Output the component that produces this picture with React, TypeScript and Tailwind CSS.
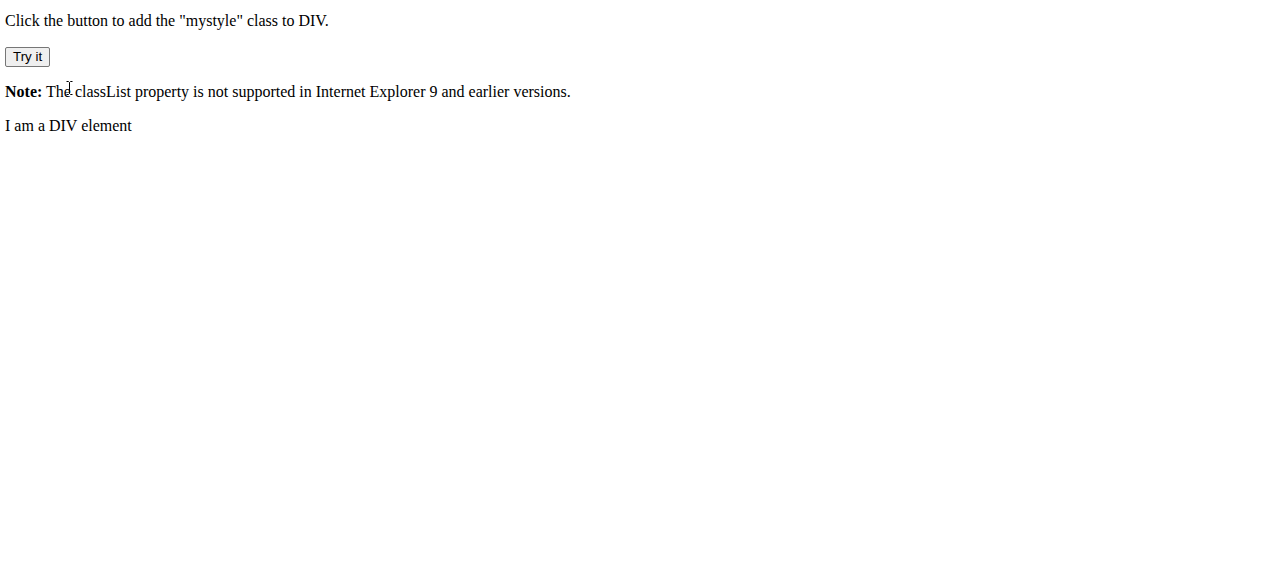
export default function App() {
  return (
    <div className="relative min-h-screen bg-white px-[5px] pt-[12px] text-black [font-family:'Liberation_Serif',serif] text-[16px]">
      <p className="mb-[17px] leading-[18.4px]">
        Click the button to add the "mystyle" class to DIV.
      </p>
      <p className="mb-4 flex">
        <button className="h-[20px] rounded-[2px] border border-[#767676] bg-[#efefef] px-[7px] text-[13.33px] leading-[16px] [font-family:'Liberation_Sans',Arial,sans-serif]">
          Try it
        </button>
      </p>
      <p className="mb-[15px] leading-[18.4px]">
        <strong>Note:</strong> The classList property is not supported in
        Internet Explorer 9 and earlier versions.
      </p>
      <div className="leading-[18px]">I am a DIV element</div>

      {/* text cursor sitting over the note line */}
      <svg
        className="absolute left-[65px] top-[80px]"
        width="9"
        height="16"
        viewBox="0 0 9 16"
      >
        <path
          d="M1.5 1.5h2l1 1 1-1h2M4.5 2.5v11M1.5 14.5h2l1-1 1 1h2"
          fill="none"
          stroke="#000"
          strokeWidth="1"
        />
      </svg>
    </div>
  );
}
